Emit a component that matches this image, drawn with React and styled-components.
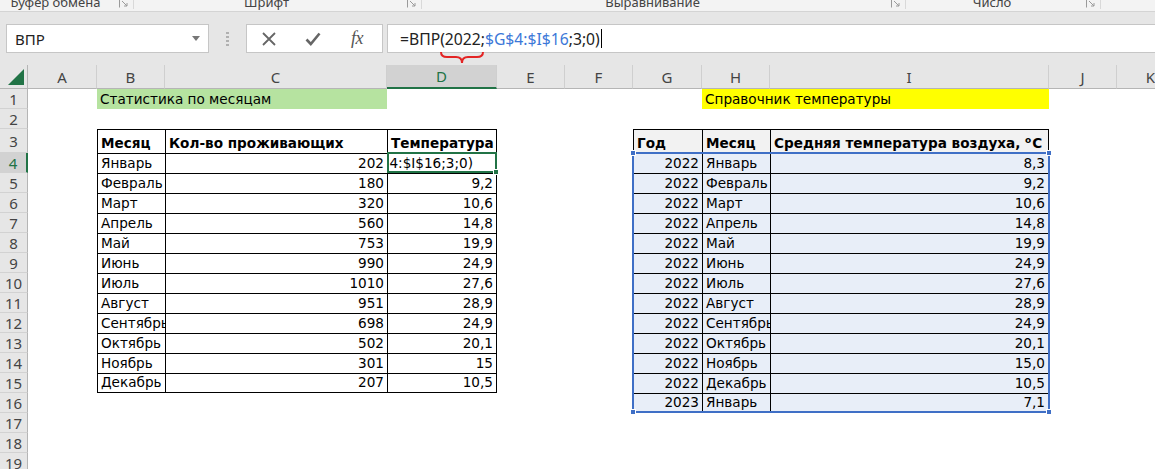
import React from "react";
import styled, { createGlobalStyle } from "styled-components";

const COLS = [28, 69, 68, 222, 110, 68, 68, 69, 68, 279, 68, 68];
const LETTERS = ["A", "B", "C", "D", "E", "F", "G", "H", "I", "J", "K"];
const ROWS = [20, 20, 24, 20, 20, 20, 20, 20, 20, 20, 20, 20, 20, 20, 20, 20, 20, 20, 20];

const stats = [
  ["Январь", "202", null],
  ["Февраль", "180", "9,2"],
  ["Март", "320", "10,6"],
  ["Апрель", "560", "14,8"],
  ["Май", "753", "19,9"],
  ["Июнь", "990", "24,9"],
  ["Июль", "1010", "27,6"],
  ["Август", "951", "28,9"],
  ["Сентябрь", "698", "24,9"],
  ["Октябрь", "502", "20,1"],
  ["Ноябрь", "301", "15"],
  ["Декабрь", "207", "10,5"],
];

const temps = [
  ["2022", "Январь", "8,3"],
  ["2022", "Февраль", "9,2"],
  ["2022", "Март", "10,6"],
  ["2022", "Апрель", "14,8"],
  ["2022", "Май", "19,9"],
  ["2022", "Июнь", "24,9"],
  ["2022", "Июль", "27,6"],
  ["2022", "Август", "28,9"],
  ["2022", "Сентябрь", "24,9"],
  ["2022", "Октябрь", "20,1"],
  ["2022", "Ноябрь", "15,0"],
  ["2022", "Декабрь", "10,5"],
  ["2023", "Январь", "7,1"],
];

const GlobalStyle = createGlobalStyle`
  html, body {
    margin: 0;
    padding: 0;
    background: #ffffff;
    overflow: hidden;
  }
  * { box-sizing: border-box; }
`;

const Page = styled.div`
  position: relative;
  width: 1155px;
  height: 469px;
  overflow: hidden;
  background: #fff;
`;

const Ribbon = styled.div`
  display: flex;
  height: 12px;
  background: #f3f3f3;
  border-bottom: 1px solid #d4d4d4;
  overflow: hidden;
  font-family: "Noto Sans", "Open Sans", sans-serif;
  font-size: 13px;
  color: #444;
`;

const Group = styled.div`
  display: flex;
  width: ${(p) => p.$w}px;
  border-right: 1px solid #d9d9d9;
  height: 9px;
`;

const GroupLabel = styled.div`
  flex: 1;
  text-align: center;
  line-height: 14px;
  margin-top: -5px;
`;

const Launcher = styled.svg`
  width: 10px;
  height: 10px;
  margin: -2px 4px 0 8px;
`;

const FormulaBand = styled.div`
  display: flex;
  align-items: stretch;
  height: 53px;
  padding: 12px 0 12px 6px;
  background: #e6e6e6;
  font-family: "Noto Sans", "Open Sans", sans-serif;
`;

const NameBox = styled.div`
  display: flex;
  align-items: center;
  justify-content: space-between;
  width: 203px;
  padding: 0 8px 0 8px;
  background: #fff;
  border: 1px solid #c6c6c6;
  font-size: 15px;
  color: #222;
`;

const Grip = styled.div`
  width: 37px;
  display: flex;
  justify-content: center;
  align-items: center;
`;

const GripDots = styled.div`
  width: 3px;
  height: 14px;
  background: repeating-linear-gradient(to bottom, #b0b0b0 0 2px, transparent 2px 4px);
`;

const IconBox = styled.div`
  display: flex;
  align-items: center;
  width: 137px;
  background: #fff;
  border: 1px solid #c6c6c6;
`;

const IconSlot = styled.div`
  width: 44px;
  display: flex;
  justify-content: center;
  align-items: center;
`;

const Fx = styled.span`
  font-family: "Liberation Serif", serif;
  font-style: italic;
  font-size: 18px;
  color: #555;
  letter-spacing: -0.5px;
`;

const FormulaBox = styled.div`
  flex: 1;
  margin-left: 4px;
  margin-right: -4px;
  display: flex;
  align-items: center;
  padding-left: 12px;
  background: #fff;
  border: 1px solid #c6c6c6;
  font-size: 15.7px;
  color: #222;
  white-space: nowrap;
`;

const Ref = styled.span`
  color: #3c78d8;
`;

const Caret = styled.span`
  display: inline-block;
  width: 1px;
  height: 19px;
  margin-left: 1px;
  background: #000;
`;

const Brace = styled.svg`
  position: absolute;
  left: 440px;
  top: 51px;
`;

const Sheet = styled.div`
  display: grid;
  grid-template-columns: ${COLS.map((w) => w + "px").join(" ")};
  grid-template-rows: 24px ${ROWS.map((h) => h + "px").join(" ")};
  font-family: "DejaVu Sans", "Liberation Sans", sans-serif;
  font-size: 13.6px;
  color: #000;
`;

const Corner = styled.div`
  grid-row: 1;
  grid-column: 1;
  background: #e6e6e6;
  border-right: 1px solid #b5b5b5;
  border-bottom: 1px solid #b5b5b5;
  display: flex;
  align-items: flex-end;
  justify-content: flex-end;
  padding: 0 3px 3px 0;
`;

const ColHead = styled.div`
  grid-row: 1;
  grid-column: ${(p) => p.$col};
  display: flex;
  align-items: center;
  justify-content: center;
  background: ${(p) => (p.$active ? "#d2d2d2" : "#e6e6e6")};
  color: ${(p) => (p.$active ? "#217346" : "#444")};
  border-right: 1px solid #cfcfcf;
  border-bottom: ${(p) => (p.$active ? "2px solid #217346" : "1px solid #b5b5b5")};
  font-family: "Noto Sans", "Open Sans", sans-serif;
  font-size: 15px;
`;

const RowHead = styled.div`
  grid-column: 1;
  grid-row: ${(p) => p.$row};
  display: flex;
  align-items: center;
  justify-content: center;
  background: ${(p) => (p.$active ? "#d2d2d2" : "#e6e6e6")};
  color: ${(p) => (p.$active ? "#217346" : "#444")};
  border-bottom: 1px solid #d2d2d2;
  border-right: ${(p) => (p.$active ? "2px solid #217346" : "1px solid #b5b5b5")};
  font-family: "Noto Sans", "Open Sans", sans-serif;
  font-size: 15px;
`;

const Cell = styled.div`
  grid-row: ${(p) => p.$row};
  grid-column: ${(p) => p.$col};
  display: flex;
  align-items: flex-end;
  justify-content: ${(p) => (p.$right ? "flex-end" : "flex-start")};
  padding: 0 3px 2px 3px;
  line-height: 16px;
  white-space: nowrap;
  overflow: hidden;
  font-weight: ${(p) => (p.$bold ? 700 : 400)};
  background: ${(p) => p.$fill || "transparent"};
`;

const TableCell = styled(Cell)`
  border-left: 1px solid #000;
  border-top: 1px solid #000;
  border-right: ${(p) => (p.$lastCol ? "1px solid #000" : "none")};
  border-bottom: ${(p) => (p.$lastRow ? "1px solid #000" : "none")};
`;

const EditText = styled.span`
  padding-right: 20px;
`;

const Sup = styled.sup`
  font-size: 9px;
  vertical-align: 5px;
  line-height: 0;
  margin-right: 1px;
`;

const Selection = styled.div`
  grid-row: 5 / 18;
  grid-column: 8 / 11;
  position: relative;
  z-index: 2;
  margin: -1px -1px 0 -1px;
  border: 2px solid #3f6fc6;
  pointer-events: none;
`;

const ActiveCell = styled.div`
  grid-row: 5;
  grid-column: 5;
  position: relative;
  z-index: 3;
  margin: -1px 0 0 0;
  border: 2px solid #217346;
  pointer-events: none;
`;

const Handle = styled.span`
  position: absolute;
  width: 6px;
  height: 6px;
  background: ${(p) => p.$color};
  border: 1px solid #fff;
  ${(p) => (p.$top ? "top: -4px;" : "bottom: -4px;")}
  ${(p) => (p.$left ? "left: -4px;" : "right: -4px;")}
`;

function LaunchIcon() {
  return (
    <Launcher viewBox="0 0 10 10">
      <path d="M0.5 9.5 V0.5 H9.5" stroke="#9a9a9a" fill="none" strokeWidth="1" />
      <path d="M3 3 L8 8 M5 8 H8 V5" stroke="#9a9a9a" fill="none" strokeWidth="1" />
    </Launcher>
  );
}

export default function App() {
  const activeRow = 4;
  return (
    <Page>
      <GlobalStyle />
      <Ribbon>
        <Group $w={134}>
          <GroupLabel>Буфер обмена</GroupLabel>
          <LaunchIcon />
        </Group>
        <Group $w={288}>
          <GroupLabel>Шрифт</GroupLabel>
          <LaunchIcon />
        </Group>
        <Group $w={484}>
          <GroupLabel>Выравнивание</GroupLabel>
          <LaunchIcon />
        </Group>
        <Group $w={195}>
          <GroupLabel>Число</GroupLabel>
          <LaunchIcon />
        </Group>
      </Ribbon>

      <FormulaBand>
        <NameBox>
          <span>ВПР</span>
          <svg width="8" height="5" viewBox="0 0 8 5">
            <path d="M0 0 H8 L4 5 Z" fill="#777" />
          </svg>
        </NameBox>
        <Grip>
          <GripDots />
        </Grip>
        <IconBox>
          <IconSlot>
            <svg width="14" height="14" viewBox="0 0 14 14">
              <path d="M1 1 L13 13 M13 1 L1 13" stroke="#666" strokeWidth="1.8" />
            </svg>
          </IconSlot>
          <IconSlot>
            <svg width="16" height="14" viewBox="0 0 16 14">
              <path d="M1.5 7.5 L5.8 12 L14.5 1.5" stroke="#666" strokeWidth="2.6" fill="none" />
            </svg>
          </IconSlot>
          <IconSlot>
            <Fx>fx</Fx>
          </IconSlot>
        </IconBox>
        <FormulaBox>
          =ВПР(2022;<Ref>$G$4:$I$16</Ref>;3;0)
          <Caret />
        </FormulaBox>
      </FormulaBand>

      <Brace width="44" height="13" viewBox="0 0 44 13">
        <path
          d="M1 1 Q1 6 7 6 L16 6 Q22 6 22 12 Q22 6 28 6 L37 6 Q43 6 43 1"
          stroke="#e32424"
          strokeWidth="2"
          fill="none"
        />
      </Brace>

      <Sheet>
        <Corner>
          <svg width="16" height="16" viewBox="0 0 16 16">
            <path d="M16 0 V16 H0 Z" fill="#217346" />
          </svg>
        </Corner>
        {LETTERS.map((l, i) => (
          <ColHead key={l} $col={i + 2} $active={l === "D"}>
            {l}
          </ColHead>
        ))}
        {ROWS.map((_, i) => (
          <RowHead key={i} $row={i + 2} $active={i + 1 === activeRow}>
            {i + 1}
          </RowHead>
        ))}

        <Cell $row={2} $col="3 / 5" $fill="#b6e3a0">
          Статистика по месяцам
        </Cell>
        <Cell $row={2} $col="9 / 11" $fill="#ffff00">
          Справочник температуры
        </Cell>

        <TableCell $row={4} $col={3} $bold>Месяц</TableCell>
        <TableCell $row={4} $col={4} $bold>Кол-во проживающих</TableCell>
        <TableCell $row={4} $col={5} $bold $lastCol>Температура</TableCell>
        {stats.map((r, i) => {
          const row = i + 5;
          const last = i === stats.length - 1;
          return (
            <React.Fragment key={r[0]}>
              <TableCell $row={row} $col={3} $lastRow={last}>{r[0]}</TableCell>
              <TableCell $row={row} $col={4} $right $lastRow={last}>{r[1]}</TableCell>
              <TableCell $row={row} $col={5} $right $lastCol $lastRow={last}>
                {r[2] === null ? <EditText>=ВПР(2022;$G$4:$I$16;3;0)</EditText> : r[2]}
              </TableCell>
            </React.Fragment>
          );
        })}

        <TableCell $row={4} $col={8} $bold $fill="#f2f2f2">Год</TableCell>
        <TableCell $row={4} $col={9} $bold $fill="#f2f2f2">Месяц</TableCell>
        <TableCell $row={4} $col={10} $bold $lastCol $fill="#f2f2f2">
          <span>
            Средняя температура воздуха, <Sup>o</Sup>C
          </span>
        </TableCell>
        {temps.map((r, i) => {
          const row = i + 5;
          const last = i === temps.length - 1;
          return (
            <React.Fragment key={i}>
              <TableCell $row={row} $col={8} $right $lastRow={last} $fill="#e8eef8">{r[0]}</TableCell>
              <TableCell $row={row} $col={9} $lastRow={last} $fill="#e8eef8">{r[1]}</TableCell>
              <TableCell $row={row} $col={10} $right $lastCol $lastRow={last} $fill="#e8eef8">{r[2]}</TableCell>
            </React.Fragment>
          );
        })}

        <Selection>
          <Handle $color="#3f6fc6" $top $left />
          <Handle $color="#3f6fc6" $top />
          <Handle $color="#3f6fc6" $left />
          <Handle $color="#3f6fc6" />
        </Selection>
        <ActiveCell>
          <Handle $color="#217346" />
        </ActiveCell>
      </Sheet>
    </Page>
  );
}
